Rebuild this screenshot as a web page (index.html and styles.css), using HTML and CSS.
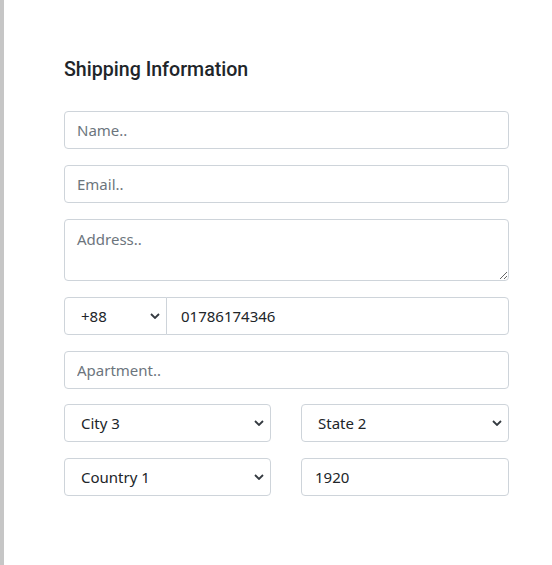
FILE: index.html
```html
<!DOCTYPE html>
<html lang="en">
<head>
<meta charset="utf-8">
<title>Shipping Information</title>
<link rel="stylesheet" href="styles.css">
</head>
<body>
<main class="page">
  <form class="shipping">
    <h5 class="title">Shipping Information</h5>
    <input class="field" type="text" placeholder="Name..">
    <input class="field" type="email" placeholder="Email..">
    <textarea class="field area" placeholder="Address.."></textarea>
    <div class="phone">
      <select class="field sel code"><option>+88</option></select>
      <input class="field num" type="text" value="01786174346">
    </div>
    <input class="field" type="text" placeholder="Apartment..">
    <div class="pair">
      <select class="field sel"><option>City 3</option></select>
      <select class="field sel state"><option>State 2</option></select>
    </div>
    <div class="pair last">
      <select class="field sel"><option>Country 1</option></select>
      <input class="field zip" type="text" value="1920">
    </div>
  </form>
</main>
</body>
</html>
```
FILE: styles.css
```css
html, body {
  margin: 0;
  height: 100%;
  background: #fff;
}
body {
  border-left: 4px solid #c6c6c6;
  box-sizing: border-box;
  font-family: "Noto Sans", "Segoe UI", sans-serif;
  color: #212529;
}
.page {
  padding: 57px 0 0 60px;
}
.shipping {
  width: 445px;
  display: flex;
  flex-direction: column;
  gap: 16px;
}
.title {
  margin: 1px 0 13px;
  font-family: Roboto, sans-serif;
  font-weight: 500;
  font-size: 19.6px;
  line-height: 24px;
  color: #212529;
}
.field {
  box-sizing: border-box;
  width: 100%;
  height: 38px;
  margin: 0;
  padding: 0 12px;
  border: 1px solid #ced4da;
  border-radius: 4px;
  background: #fff;
  font-family: "Noto Sans", sans-serif;
  font-size: 15px;
  color: #212529;
  outline: none;
}
.field::placeholder {
  color: #6c757d;
  opacity: 1;
}
.area {
  height: 62px;
  padding-top: 8px;
  resize: vertical;
  line-height: 22px;
}
.sel {
  appearance: none;
  -webkit-appearance: none;
  padding-left: 16px;
  background-image: url("data:image/svg+xml,%3Csvg xmlns='http://www.w3.org/2000/svg' width='10' height='6' viewBox='0 0 10 6'%3E%3Cpath d='M1 1l4 4 4-4' fill='none' stroke='%23343a40' stroke-width='1.8'/%3E%3C/svg%3E");
  background-repeat: no-repeat;
  background-position: right 6px center;
  background-size: 10px 6px;
}
.phone {
  display: flex;
}
.phone .code {
  width: 103px;
  flex: none;
  border-radius: 4px 0 0 4px;
}
.phone .num {
  flex: 1;
  margin-left: -1px;
  border-radius: 0 4px 4px 0;
  padding-left: 14px;
}
.pair {
  display: grid;
  grid-template-columns: 207px 208px;
  column-gap: 30px;
  margin-top: -1px;
}
.pair.last {
  margin-top: 0;
}
.zip {
  padding-left: 13px;
}
```
